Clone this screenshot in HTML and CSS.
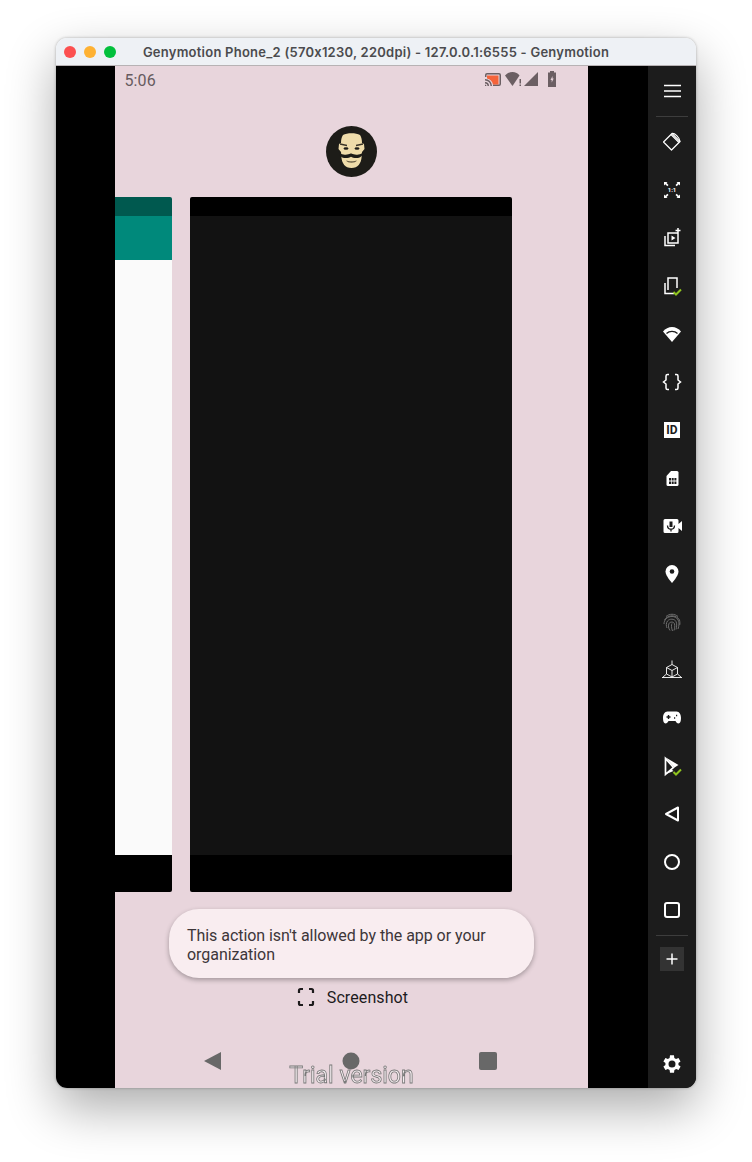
FILE: index.html
```html
<!DOCTYPE html>
<html lang="en">

<head>
  <meta charset="UTF-8">
  <meta name="viewport" content="width=device-width, initial-scale=1.0">
  <title>Genymotion Phone_2</title>
  <link rel="stylesheet" href="styles.css">
</head>

<body>
  <div class="window">
    <div class="titlebar">
      <div class="lights">
        <span class="light light-red"></span>
        <span class="light light-yellow"></span>
        <span class="light light-green"></span>
      </div>
      <div class="title">Genymotion Phone_2 (570x1230, 220dpi) - 127.0.0.1:6555 - Genymotion</div>
    </div>

    <div class="content">
      <div class="phone">
        <div class="statusbar">
          <span class="clock">5:06</span>
          <div class="status-icons">
            <svg class="status-cast" width="18" height="16" viewBox="0 0 18 16">
              <path d="M3 2h12a2 2 0 0 1 2 2v9a2 2 0 0 1-2 2H9v-1.500h6a.5.5 0 0 0 .5-.5V4a.5.5 0 0 0-.5-.5H3a.5.5 0 0 0-.5.5v2H1V4a2 2 0 0 1 2-2z" fill="#6b5f63"/>
              <path d="M3 4.500h11.500v9H9A8 8 0 0 0 3 7.500z" fill="#f4633a"/>
              <path d="M1 8a7 7 0 0 1 7 7H6.500A5.500 5.500 0 0 0 1 9.500zM1 11a4 4 0 0 1 4 4H3.500A2.500 2.500 0 0 0 1 12.500zM1 13.500a1.500 1.500 0 0 1 1.500 1.500H1z" fill="#6b5f63"/>
            </svg>
            <svg width="17" height="16" viewBox="0 0 17 16">
              <path d="M0 4.500C2 2.500 4.500 1 7.500 1s5.500 1.500 7 3.500L7.500 15z" fill="#6b5f63"/>
              <path d="M14.500 8H16v4.500h-1.500zM14.500 13.500H16V15h-1.500z" fill="#6b5f63"/>
            </svg>
            <svg class="status-signal" width="15" height="16" viewBox="0 0 15 16">
              <path d="M15 1v14H1z" fill="#6b5f63"/>
            </svg>
            <svg class="status-battery" width="10" height="16" viewBox="0 0 10 16">
              <path d="M3 0h4v1.500h2V16H1V1.500h2z" fill="#6b5f63"/>
              <path d="M5.500 5L3.500 9h1.200v2.500l2-4H5.500z" fill="#e8d5dc"/>
            </svg>
          </div>
        </div>

        <div class="avatar">
          <svg width="51" height="51" viewBox="0 0 51 51">
            <circle cx="25.500" cy="25.500" r="25.500" fill="#1d1c18"/>
            <path d="M17 9c4-2.500 13-2.500 17 0 1.500 2 2 5 2 8l2 1 .5 5-2.500 3-.5 6c-.5 5-3.500 10-10 10s-9.500-5-10-10l-.5-6-2.500-3 .5-5 2-1c0-3 .5-6 2-8z" fill="#efdcaa"/>
            <path d="M14 18l7 1.500M37 18l-7 1.500" fill="none" stroke="#3a3427" stroke-width="1.300"/>
            <ellipse cx="20" cy="22.500" rx="2.500" ry="1.200" fill="#1d1c18"/>
            <ellipse cx="31" cy="22.500" rx="2.500" ry="1.200" fill="#1d1c18"/>
            <path d="M25.500 27.500c2 1 4 1.500 7 1 2-.3 3.500-1 4.500-2 0 3.500-3 5.500-6.500 5.500-2.500 0-4.500-.3-5.500-1.200-1 .9-3 1.200-5.500 1.200-3.500 0-6.500-2-6.500-5.500 1 1 2.500 1.700 4.500 2 3 .5 5 0 7-1z" fill="#1d1c18"/>
            <path d="M20 34.500c3 1 8 1 11 0-1 1.500-3 2.200-5.500 2.200S21 36 20 34.500z" fill="#6b5f45"/>
          </svg>
        </div>

        <div class="cards">
          <div class="card">
            <div class="card-top card-top-teal"></div>
            <div class="card-appbar"></div>
            <div class="card-body card-body-light"></div>
            <div class="card-bottom"></div>
          </div>
          <div class="card">
            <div class="card-top"></div>
            <div class="card-body"></div>
            <div class="card-bottom"></div>
          </div>
        </div>

        <div class="toast">This action isn't allowed by the app or your organization</div>

        <div class="screenshot-row">
          <svg width="18" height="20" viewBox="0 0 18 20" fill="none" stroke="#1d1b1c" stroke-width="2.200">
            <path d="M2 6V3.500A1.500 1.500 0 0 1 3.500 2H6M12 2h2.500A1.500 1.500 0 0 1 16 3.500V6M16 14v2.500a1.500 1.500 0 0 1-1.500 1.500H12M6 18H3.500A1.500 1.500 0 0 1 2 16.500V14"/>
          </svg>
          <span class="screenshot-label">Screenshot</span>
        </div>

        <div class="navbar">
          <svg width="18" height="20" viewBox="0 0 18 20"><path d="M17 1v18L0 10z" fill="#686868"/></svg>
          <svg width="18" height="18" viewBox="0 0 18 18"><circle cx="9" cy="9" r="8.500" fill="#686868"/></svg>
          <svg width="18" height="18" viewBox="0 0 18 18"><rect width="18" height="18" rx="2" fill="#686868"/></svg>
        </div>
      </div>

      <div class="toolbar">
        <div class="tool">
          <svg width="24" height="24" viewBox="0 0 24 24" fill="none" stroke="#fff" stroke-width="1.700"><path d="M4 6.500h17M4 12h17M4 17.500h17"/></svg>
        </div>
        <div class="tool-sep"></div>
        <div class="tool">
          <svg width="24" height="24" viewBox="0 0 24 24" fill="none" stroke="#fff" stroke-width="1.200"><path d="M12 3.500l8 8-8.500 8.500-8-8z" stroke-linejoin="round"/><path d="M12 3.500c2.500-.5 7.500 3.500 8 8M11 4.500l8 8"/></svg>
        </div>
        <div class="tool">
          <svg width="24" height="24" viewBox="0 0 24 24"><path d="M4 4h3.500L6.500 5l2 2-1.200 1.200-2-2L4 7.500zM20 4v3.500L18.700 6.200l-2 2L15.500 7l2-2-1-1zM4 20v-3.500l1.300 1.300 2-2L8.500 17l-2 2 1 1zM20 20h-3.500l1-1-2-2 1.200-1.200 2 2 1.300-1.300z" fill="#fff"/><text x="12" y="14.200" class="ratio-label">1:1</text></svg>
        </div>
        <div class="tool">
          <svg width="24" height="24" viewBox="0 0 24 24" fill="none" stroke="#fff" stroke-width="1.500"><path d="M8 7h10v10H8zM5 10v9.500h10M18 2v5M15.500 4.500h5"/><path d="M11.500 9.500l4 2.500-4 2.500z" fill="#fff" stroke="none"/></svg>
        </div>
        <div class="tool">
          <svg width="24" height="24" viewBox="0 0 24 24" fill="none" stroke="#fff" stroke-width="1.500"><path d="M8 16V4h9v10M5 9v10.500h9"/><path d="M13.500 18l2.500 2.500 5-5" stroke="#8fc31f" stroke-width="2"/></svg>
        </div>
        <div class="tool">
          <svg width="24" height="24" viewBox="0 0 24 24"><path d="M3 9.500C5.500 6.500 8.500 5 12 5s6.500 1.500 9 4.500L12 20z" fill="#fff"/><path d="M6.500 11.500C8 10 10 9.300 12 9.300s4 .7 5.500 2.200" fill="none" stroke="#1c1c1c" stroke-width="1.300"/></svg>
        </div>
        <div class="tool">
          <svg width="24" height="24" viewBox="0 0 24 24" fill="none" stroke="#fff" stroke-width="1.500"><path d="M9 4.500H7.500A1.500 1.500 0 0 0 6 6v4l-2.500 2L6 14v4a1.500 1.500 0 0 0 1.500 1.500H9M15 4.500h1.500A1.500 1.500 0 0 1 18 6v4l2.500 2-2.500 2v4a1.500 1.500 0 0 1-1.500 1.500H15"/></svg>
        </div>
        <div class="tool">
          <span class="id-badge">ID</span>
        </div>
        <div class="tool">
          <svg width="24" height="24" viewBox="0 0 24 24"><path d="M11 5h6a1.500 1.500 0 0 1 1.500 1.500v12A1.500 1.500 0 0 1 17 20H8a1.500 1.500 0 0 1-1.500-1.500V10z" fill="#fff"/><path d="M9 12h2v2.500H9zM11.700 12h2v2.500h-2zM14.400 12h2v2.500h-2zM9 15.500h2V18H9zM11.700 15.500h2V18h-2zM14.400 15.500h2V18h-2z" fill="#1c1c1c"/></svg>
        </div>
        <div class="tool">
          <svg width="24" height="24" viewBox="0 0 24 24"><path d="M5 5h12a1.500 1.500 0 0 1 1.500 1.500V10l3.500-3v10l-3.500-3v3.500A1.500 1.500 0 0 1 17 19H5a1.500 1.500 0 0 1-1.500-1.500v-11A1.500 1.500 0 0 1 5 5z" fill="#fff"/><path d="M9.500 7.500h3v5.500h-3z" fill="#1c1c1c"/><path d="M7.500 11.500c0 5 7 5 7 0M11 15v2.500" fill="none" stroke="#1c1c1c" stroke-width="1.300"/></svg>
        </div>
        <div class="tool">
          <svg width="24" height="24" viewBox="0 0 24 24"><path d="M12 3a6.500 6.500 0 0 0-6.500 6.500C5.500 14 12 21 12 21s6.500-7 6.500-11.500A6.500 6.500 0 0 0 12 3z" fill="#fff"/><circle cx="12" cy="9.500" r="2.300" fill="#1c1c1c"/></svg>
        </div>
        <div class="tool">
          <svg width="24" height="24" viewBox="0 0 24 24" fill="none" stroke="#6e6e6e" stroke-width="1"><path d="M6 6.500c3.500-3 8.500-3 12 0M4.500 10c3-5.500 12-5.500 15 0 .5 2 .5 4 .2 5M4 14c0-4 3-7.500 8-7.500s7 4 7 7.500c0 2-.5 3.500-1 5M7 18c-1-2-1-5 .5-7 2-2.500 7-2.500 8.500 .5 1 2 .8 5 0 8M10 20.500c-1.500-2-2-5-1-7 1-2 5-2 5.500 .5.500 2 .3 4-.5 6.500M12 13.500c-1 1-.5 5 .5 7.500"/></svg>
        </div>
        <div class="tool">
          <svg width="24" height="24" viewBox="0 0 24 24" fill="none" stroke="#fff" stroke-width="0.900"><path d="M12 2.500v4M12 6.500l5.500 3v6.500L12 19l-5.500-3V9.500zM6.500 9.500L12 12.500l5.500-3M12 12.500V19M2.500 19.500L6.500 16M21.500 19.500L17.500 16M2 19.500h20"/></svg>
        </div>
        <div class="tool">
          <svg width="24" height="24" viewBox="0 0 24 24"><path d="M7.500 5.500h9c3 0 4.500 3 4.500 6.500 0 3-.8 5.500-2.500 5.500-1.400 0-2.200-1.200-3-2.500h-7c-.8 1.300-1.600 2.500-3 2.500C3.800 17.500 3 15 3 12c0-3.500 1.500-6.500 4.500-6.500z" fill="#fff"/><path d="M6.500 11h4M8.500 9v4M14 12h1.200M16 9.500h1.200" stroke="#1c1c1c" stroke-width="1.400" fill="none"/></svg>
        </div>
        <div class="tool">
          <svg width="24" height="24" viewBox="0 0 24 24"><path d="M5 3l13.500 8-4 2.500z" fill="#fff"/><path d="M5.500 4.500l8 9-8 7z" fill="none" stroke="#fff" stroke-width="1.700"/><path d="M5 20.500l6.500-5 2 1.500z" fill="#fff"/><path d="M13.500 18l2.500 2.500 5-5" fill="none" stroke="#8fc31f" stroke-width="2"/></svg>
        </div>
        <div class="tool">
          <svg width="24" height="24" viewBox="0 0 24 24" fill="none" stroke="#fff" stroke-width="2"><path d="M18 5.500v13L6 12z" stroke-linejoin="round"/></svg>
        </div>
        <div class="tool">
          <svg width="24" height="24" viewBox="0 0 24 24" fill="none" stroke="#fff" stroke-width="2"><circle cx="12" cy="12" r="7"/></svg>
        </div>
        <div class="tool">
          <svg width="24" height="24" viewBox="0 0 24 24" fill="none" stroke="#fff" stroke-width="2"><rect x="5" y="5" width="14" height="14" rx="2"/></svg>
        </div>
        <div class="tool-sep"></div>
        <div class="tool-add">
          <svg width="24" height="24" viewBox="0 0 24 24" fill="none" stroke="#fff" stroke-width="1.500"><path d="M12 6.500v11M6.500 12h11"/></svg>
        </div>
        <div class="tool tool-gear">
          <svg width="24" height="24" viewBox="0 0 24 24"><path d="M19.400 13c.1-.3.100-.7.100-1s0-.7-.1-1l2.100-1.600-2-3.500-2.500 1c-.5-.4-1.100-.7-1.700-1L15 3.300h-4l-.4 2.600c-.6.300-1.200.6-1.700 1l-2.500-1-2 3.500L6.500 11c-.1.300-.1.700-.1 1s0 .7.100 1l-2.100 1.600 2 3.500 2.500-1c.5.400 1.100.7 1.700 1l.4 2.600h4l.4-2.600c.6-.3 1.200-.6 1.700-1l2.500 1 2-3.500zM13 15.500a3.500 3.500 0 1 1 0-7 3.500 3.500 0 0 1 0 7z" transform="translate(-1 0)" fill="#fff"/></svg>
        </div>
      </div>
    </div>

    <div class="watermark">Trial version</div>
  </div>
</body>

</html>
```

FILE: styles.css
```css
* {
  box-sizing: border-box;
}

body {
  margin: 0;
  padding: 38px 56px 74px;
  background-color: #ffffff;
  font-family: Roboto, "Liberation Sans", sans-serif;
}

.window {
  position: relative;
  width: 640px;
  height: 1050px;
  border-radius: 11px;
  box-shadow: 0 20px 50px rgba(0, 0, 0, 0.33), 0 0 3px rgba(0, 0, 0, 0.3);
}

.titlebar {
  display: flex;
  align-items: center;
  height: 28px;
  padding-left: 8px;
  background-color: #eef1f5;
  border-bottom: 1px solid #b7b2b4;
  border-radius: 11px 11px 0 0;
}

.lights {
  display: flex;
  gap: 8px;
}

.light {
  width: 12px;
  height: 12px;
  border-radius: 50%;
}

.light-red {
  background-color: #fc5050;
}

.light-yellow {
  background-color: #feb132;
}

.light-green {
  background-color: #02c03c;
}

.title {
  flex: 1;
  padding-right: 60px;
  text-align: center;
  font-family: Inter, "Liberation Sans", sans-serif;
  font-size: 13px;
  font-weight: 600;
  letter-spacing: 0.24px;
  color: #4b4b4e;
  white-space: nowrap;
}

.content {
  display: flex;
  height: 1022px;
  padding-left: 59px;
  background-color: #000000;
  border-radius: 0 0 11px 11px;
  overflow: hidden;
}

.phone {
  display: flex;
  flex-direction: column;
  align-items: center;
  width: 473px;
  background-color: #e8d5dc;
  overflow: hidden;
}

.statusbar {
  display: flex;
  align-items: center;
  justify-content: space-between;
  align-self: stretch;
  height: 29px;
  padding: 0 31px 0 9.5px;
}

.clock {
  font-size: 16px;
  letter-spacing: 0.1px;
  color: #665b5f;
}

.status-icons {
  display: flex;
  align-items: center;
  gap: 2px;
  margin-top: -4px;
}

.status-cast {
  margin-right: 1px;
}

.status-signal {
  margin-left: -1px;
}

.status-battery {
  margin-left: 7px;
}

.avatar {
  display: flex;
  width: 51px;
  height: 51px;
  margin-top: 31px;
}

.cards {
  display: flex;
  justify-content: flex-end;
  gap: 18px;
  align-self: stretch;
  height: 695px;
  margin-top: 20px;
  padding-right: 76px;
}

.card {
  display: flex;
  flex-direction: column;
  flex-shrink: 0;
  width: 322px;
  border-radius: 2px;
  overflow: hidden;
}

.card-top {
  height: 19px;
  background-color: #000000;
}

.card-top-teal {
  background-color: #00594f;
}

.card-appbar {
  height: 44px;
  background-color: #00897b;
}

.card-body {
  flex: 1;
  background-color: #121212;
}

.card-body-light {
  background-color: #fafafa;
}

.card-bottom {
  height: 37px;
  background-color: #000000;
}

.toast {
  width: 365px;
  height: 69px;
  margin-top: 17px;
  padding: 17px 18px;
  border-radius: 30px;
  background-color: #f9edf0;
  box-shadow: 0 2px 5px rgba(0, 0, 0, 0.3);
  font-size: 16px;
  line-height: 19px;
  letter-spacing: -0.05px;
  color: #3d3639;
}

.screenshot-row {
  display: flex;
  align-items: center;
  gap: 12px;
  height: 20px;
  margin-top: 9px;
  padding-left: 2px;
}

.screenshot-label {
  font-size: 16px;
  letter-spacing: 0.1px;
  color: #1d1b1c;
}

.navbar {
  display: flex;
  align-items: center;
  justify-content: space-between;
  width: 293px;
  height: 20px;
  margin: 44px 2px 0 0;
}

.toolbar {
  display: flex;
  flex-direction: column;
  align-items: center;
  width: 48px;
  margin-left: 60px;
  padding-top: 1px;
  background-color: #1c1c1c;
}

.tool {
  display: flex;
  align-items: center;
  justify-content: center;
  flex-shrink: 0;
  width: 48px;
  height: 48px;
}

.tool-sep {
  flex-shrink: 0;
  width: 32px;
  height: 1px;
  margin: 1px 0;
  background-color: #3d3d3d;
}

.tool-add {
  display: flex;
  align-items: center;
  justify-content: center;
  flex-shrink: 0;
  width: 24px;
  height: 24px;
  margin-top: 10px;
  background-color: #333333;
}

.tool-gear {
  margin-top: auto;
}

.ratio-label {
  font-size: 6px;
  font-weight: 700;
  text-anchor: middle;
  fill: #ffffff;
}

.id-badge {
  display: block;
  width: 16px;
  height: 16px;
  background-color: #ffffff;
  font-size: 12px;
  font-weight: 700;
  line-height: 16px;
  text-align: center;
  color: #1c1c1c;
}

.watermark {
  position: absolute;
  left: 59px;
  bottom: -1px;
  width: 473px;
  text-align: center;
  font-size: 23px;
  line-height: 26px;
  color: #f4ecef;
  -webkit-text-stroke: 0.8px #777777;
  will-change: transform;
}
```
